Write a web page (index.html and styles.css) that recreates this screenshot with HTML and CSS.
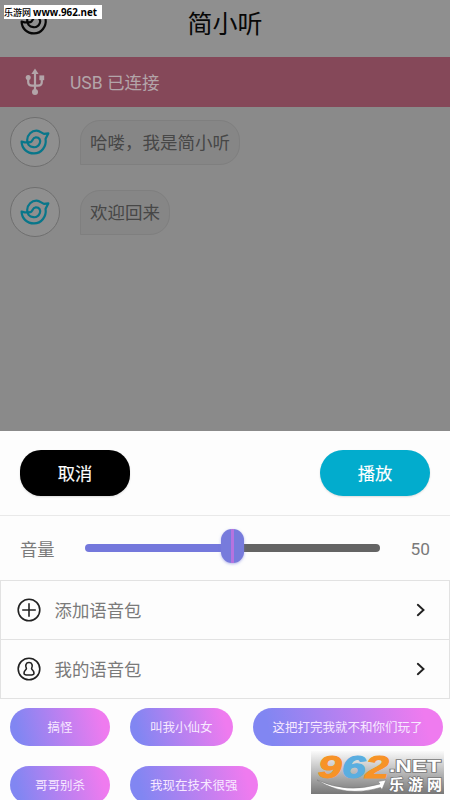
FILE: index.html
```html
<!DOCTYPE html>
<html lang="zh-CN">
<head>
<meta charset="utf-8">
<title>简小听</title>
<link rel="stylesheet" href="styles.css">
</head>
<body>
<svg class="defs" width="0" height="0">
  <symbol id="bird" viewBox="0 0 30 26">
    <path d="M1.6 12.6Q6.5 14 10.4 13.2C12.8 12.6 12 8.8 15.8 8.4C19.4 8.2 21 11.4 19.8 14.2C18.6 17.2 16 18.5 13.3 18.2C9.2 17.8 7 14.5 7.2 10.8C7.6 5.5 11.5 1.7 16.5 1.7C20.3 1.7 21.5 4.6 24 4.8L28.3 4.4L25.6 9.8C26.6 17.5 21.5 24.4 14 24.4C7 24.4 1.8 19.5 1.6 12.6Z" fill="none" stroke="currentColor" stroke-width="2.2" stroke-linecap="round" stroke-linejoin="round"/>
  </symbol>
  <symbol id="chevron" viewBox="0 0 10 14">
    <path d="M1.8 1.8L7.5 7L1.8 12.2" fill="none" stroke="currentColor" stroke-width="1.9" stroke-linecap="round"/>
  </symbol>
</svg>
<main class="screen">
  <header class="topbar">
    <svg class="topbar-logo"><use href="#bird"/></svg>
    <h1>简小听</h1>
    <div class="site-tag">乐游网 <span>www.962.net</span></div>
  </header>
  <section class="usb">
    <svg class="usb-icon" viewBox="0 0 20 28" fill="none" stroke="currentColor" stroke-width="2.2">
      <path d="M10 4V24M3.2 10V14Q3.2 17.6 7 17.6H13Q16.8 17.6 16.8 14V10"/>
      <path d="M10 .6L13.6 6H6.4Z" fill="currentColor" stroke="none"/>
      <circle cx="10" cy="24" r="3" fill="currentColor" stroke="none"/>
      <circle cx="3.2" cy="9.6" r="2.5" fill="currentColor" stroke="none"/>
      <path d="M14.4 7.4h4.8v4.8h-4.8z" fill="currentColor" stroke="none"/>
    </svg>
    <span>USB 已连接</span>
  </section>
  <section class="chat">
    <div class="message"><div class="avatar"><svg><use href="#bird"/></svg></div><p class="bubble">哈喽，我是简小听</p></div>
    <div class="message"><div class="avatar"><svg><use href="#bird"/></svg></div><p class="bubble">欢迎回来</p></div>
  </section>
  <section class="sheet">
    <div class="actions">
      <button class="cancel">取消</button>
      <button class="play">播放</button>
    </div>
    <div class="volume">
      <span class="volume-label">音量</span>
      <div class="track"><i class="thumb"></i></div>
      <span class="volume-value">50</span>
    </div>
    <div class="row">
      <svg class="row-icon" viewBox="0 0 24 24" fill="none" stroke="currentColor" stroke-width="1.6"><circle cx="12" cy="12" r="10.8"/><path d="M12 5.2V18.8M5.2 12H18.8"/></svg>
      <span>添加语音包</span>
      <svg class="chevron"><use href="#chevron"/></svg>
    </div>
    <div class="row">
      <svg class="row-icon" viewBox="0 0 24 24" fill="none" stroke="currentColor" stroke-width="1.6"><circle cx="12" cy="12" r="10.8"/><path d="M12 5.5C8.8 5.5 8 8.6 9.4 11.5C9.4 13 7 13.3 7 16.2C7 18.2 9.5 18 12 18S17 18.2 17 16.2C17 13.3 14.6 13 14.6 11.5C16 8.6 15.2 5.5 12 5.5Z"/></svg>
      <span>我的语音包</span>
      <svg class="chevron"><use href="#chevron"/></svg>
    </div>
    <div class="tags">
      <span class="tag">搞怪</span>
      <span class="tag">叫我小仙女</span>
      <span class="tag">这把打完我就不和你们玩了</span>
      <span class="tag">哥哥别杀</span>
      <span class="tag">我现在技术很强</span>
    </div>
  </section>
  <div class="brand">
    <svg viewBox="0 0 133 43" width="133" height="43">
      <path d="M6 29Q36 43 69 33L67 30.5L75 29L71 38.500L69.500 36.500Q34 47 6 29Z" fill="#fff" stroke="#777" stroke-width=".5"/>
      <text class="brand-digits" x="7" y="26.500" textLength="71" lengthAdjust="spacingAndGlyphs"><tspan class="orange">9</tspan><tspan class="blue">6</tspan><tspan class="orange">2</tspan></text>
      <text class="brand-net" x="78" y="21" textLength="52" lengthAdjust="spacingAndGlyphs">.NET</text>
      <text class="brand-cn" x="78" y="39" textLength="53">乐游网</text>
    </svg>
  </div>
</main>
</body>
</html>
```
FILE: styles.css
```css
* { box-sizing: border-box; }
body { margin: 0; font-family: Roboto, "Noto Sans CJK SC", sans-serif; }
.defs { position: absolute; }
.screen {
  position: relative;
  display: flex;
  flex-direction: column;
  width: 450px;
  height: 800px;
  overflow: hidden;
  background: #8a8a8a;
}
.topbar {
  position: relative;
  flex: none;
  display: flex;
  justify-content: center;
  height: 57px;
  background: #8f8f8f;
}
.topbar h1 { margin: 0; font-size: 25px; font-weight: 400; line-height: 49px; color: #080808; }
.topbar-logo { position: absolute; left: 20px; top: 9px; width: 30px; height: 26px; color: #080808; }
.site-tag {
  position: absolute;
  left: 4px;
  top: 5px;
  width: 98px;
  height: 14px;
  background: #fff;
  color: #000;
  font: 500 9px/15px "Noto Sans CJK SC", sans-serif;
  white-space: nowrap;
}
.site-tag span { font: 700 9.8px/14px "Open Sans", sans-serif; }
.usb {
  flex: none;
  display: flex;
  align-items: center;
  height: 50px;
  padding-left: 25px;
  background: #854859;
  color: #b3a5a9;
  font-size: 17.5px;
}
.usb span { margin-top: -2px; }
.usb-icon { width: 20px; height: 28px; margin-right: 25px; }
.chat { flex: none; height: 324px; padding: 10px 10px 0; display: flex; flex-direction: column; gap: 20px; }
.message { display: flex; height: 50px; gap: 20px; }
.avatar {
  display: flex;
  align-items: center;
  justify-content: center;
  width: 50px;
  height: 50px;
  border: 1px solid #6f6f6f;
  border-radius: 50%;
  background: #8f8f8f;
  color: #08768a;
}
.avatar svg { width: 30px; height: 26px; }
.bubble {
  height: 45px;
  margin: 3px 0 0;
  padding: 0 9px;
  border: 1px solid #7f7f7f;
  border-radius: 20px 20px 20px 0;
  background: #868686;
  color: #474747;
  font-size: 17.5px;
  line-height: 45px;
}
.sheet { flex: none; height: 369px; background: #fdfdfd; }
.actions {
  display: flex;
  justify-content: space-between;
  height: 85px;
  padding: 19px 20px 0;
  border-bottom: 1px solid #e9e9e9;
}
.actions button {
  width: 110px;
  height: 46px;
  padding: 0;
  border: 0;
  border-radius: 21px;
  color: #fff;
  font: 400 17.3px/48px Roboto, "Noto Sans CJK SC", sans-serif;
  -webkit-text-stroke: .15px #fff;
  box-shadow: 0 1px 2px #0002;
}
.actions .cancel { background: #000; }
.actions .play { background: #02accd; border-radius: 23px; }
.volume {
  display: flex;
  align-items: center;
  height: 64px;
  padding: 2px 20px 0;
  color: #7a7a7a;
  font-size: 17.3px;
}
.volume-label { width: 65px; margin-top: -2px; }
.track {
  position: relative;
  width: 295px;
  height: 8px;
  margin-top: -3px;
  border-radius: 4px;
  background: linear-gradient(90deg, #7478dc 50%, #646464 50%);
}
.thumb {
  position: absolute;
  left: 136px;
  top: -15px;
  width: 23px;
  height: 34px;
  border-radius: 11px;
  background: linear-gradient(90deg, transparent 10px, #b673df 10px 13px, transparent 13px), #777bdc;
  box-shadow: 0 1px 3px #7478dc88;
}
.volume-value { margin-left: auto; }
.row {
  display: flex;
  align-items: center;
  height: 59px;
  padding: 0 23px 0 16px;
  border: 1px solid #e2e2e2;
  border-bottom-width: 0;
  color: #7a7a7a;
  font-size: 17.4px;
}
.row span { margin-top: -2px; }
.row + .row { height: 60px; border-bottom-width: 1px; }
.row-icon { width: 24px; height: 24px; margin: -1px 13.500px 0 0; color: #222; }
.chevron { width: 10px; height: 14px; margin: -1px 0 0 auto; color: #222; }
.tags { display: flex; flex-wrap: wrap; gap: 20px; padding: 9px 0 0 10px; width: 460px; }
.tag {
  min-width: 100px;
  height: 38px;
  padding: 0 20px;
  border-radius: 19px;
  background: linear-gradient(75deg, #8186f2 10%, #ef7bef 90%);
  color: #f8e9ff;
  font-size: 12.5px;
  line-height: 39px;
  text-align: center;
  white-space: nowrap;
}
.brand {
  position: absolute;
  left: 311px;
  top: 751px;
  width: 133px;
  height: 43px;
  background: linear-gradient(#fafafa, #777);
}
.brand svg { display: block; }
.brand text { paint-order: stroke; }
.brand-digits { font: italic 700 32px "Liberation Sans", sans-serif; stroke-width: 1px; }
.orange { fill: #f79327; stroke: #f79327; }
.blue { fill: #5aaee0; stroke: #5aaee0; }
.brand-net, .brand-cn { fill: #fff; stroke: #777; stroke-width: 1.6px; }
.brand-net { font: 700 17px "Liberation Sans", sans-serif; }
.brand-cn { font: 700 15px "Noto Sans CJK SC", sans-serif; }
```
